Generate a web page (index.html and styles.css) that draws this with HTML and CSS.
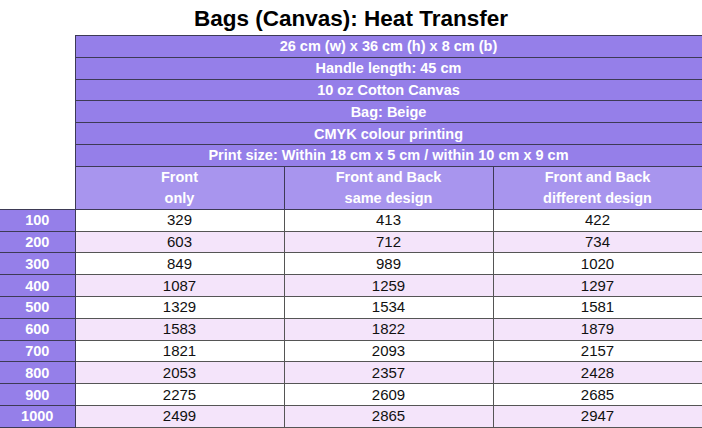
FILE: index.html
```html
<!DOCTYPE html>
<html>
<head>
<meta charset="utf-8">
<link rel="stylesheet" href="styles.css">
</head>
<body>
<h1 class="title">Bags (Canvas): Heat Transfer</h1>
<table class="price">
  <colgroup>
    <col class="c-label"><col class="c-val"><col class="c-val"><col class="c-val">
  </colgroup>
  <tbody>
    <tr class="spec"><td class="blank"></td><td colspan="3">26 cm (w) x 36 cm (h) x 8 cm (b)</td></tr>
    <tr class="spec"><td class="blank"></td><td colspan="3">Handle length: 45 cm</td></tr>
    <tr class="spec"><td class="blank"></td><td colspan="3">10 oz Cotton Canvas</td></tr>
    <tr class="spec"><td class="blank"></td><td colspan="3">Bag: Beige</td></tr>
    <tr class="spec"><td class="blank"></td><td colspan="3">CMYK colour printing</td></tr>
    <tr class="spec"><td class="blank"></td><td colspan="3">Print size: Within 18 cm x 5 cm / within 10 cm x 9 cm</td></tr>
    <tr class="colhead"><td class="blank"></td><td>Front<br>only</td><td>Front and Back<br>same design</td><td>Front and Back<br>different design</td></tr>
    <tr class="row"><th>100</th><td>329</td><td>413</td><td>422</td></tr>
    <tr class="row alt"><th>200</th><td>603</td><td>712</td><td>734</td></tr>
    <tr class="row"><th>300</th><td>849</td><td>989</td><td>1020</td></tr>
    <tr class="row alt"><th>400</th><td>1087</td><td>1259</td><td>1297</td></tr>
    <tr class="row"><th>500</th><td>1329</td><td>1534</td><td>1581</td></tr>
    <tr class="row alt"><th>600</th><td>1583</td><td>1822</td><td>1879</td></tr>
    <tr class="row"><th>700</th><td>1821</td><td>2093</td><td>2157</td></tr>
    <tr class="row alt"><th>800</th><td>2053</td><td>2357</td><td>2428</td></tr>
    <tr class="row"><th>900</th><td>2275</td><td>2609</td><td>2685</td></tr>
    <tr class="row alt"><th>1000</th><td>2499</td><td>2865</td><td>2947</td></tr>
  </tbody>
</table>
</body>
</html>
```

FILE: styles.css
```css
html, body {
  margin: 0;
  padding: 0;
  background: #ffffff;
}
body {
  font-family: "Liberation Sans", Arial, sans-serif;
  width: 702px;
}
.title {
  margin: 0;
  height: 35px;
  font-size: 22.5px;
  line-height: 38px;
  font-weight: bold;
  text-align: center;
  color: #000;
}
.price {
  border-collapse: collapse;
  table-layout: fixed;
  width: 702px;
}
.c-label { width: 75px; }
.c-val { width: 209px; }
.price td, .price th {
  padding: 0;
  text-align: center;
  font-size: 14.5px;
}
.price td.blank {
  background: #fff;
  border: none;
}
.spec td {
  height: 20.8px;
  line-height: 20px;
  background: #957fe9;
  color: #fff;
  font-weight: bold;
  border: 1px solid #3d3a55;
}
.colhead td {
  height: 42px;
  background: #a895ee;
  color: #fff;
  font-weight: bold;
  line-height: 21px;
  border: 1px solid #3d3a55;
}
.row th {
  height: 20.8px;
  line-height: 20px;
  background: #957fe9;
  color: #fff;
  font-weight: bold;
  border-top: 1px solid #3d3a55;
  border-bottom: 1px solid #3d3a55;
  border-right: 1px solid #3d3a55;
}
.row td {
  line-height: 20px;
  font-size: 15px;
  color: #111;
  background: #fff;
  border-top: 1px solid #555;
  border-bottom: 1px solid #555;
  border-left: 1px solid #777;
  border-right: 1px solid #555;
}
.row.alt td {
  background: #f4e4fa;
}
```
